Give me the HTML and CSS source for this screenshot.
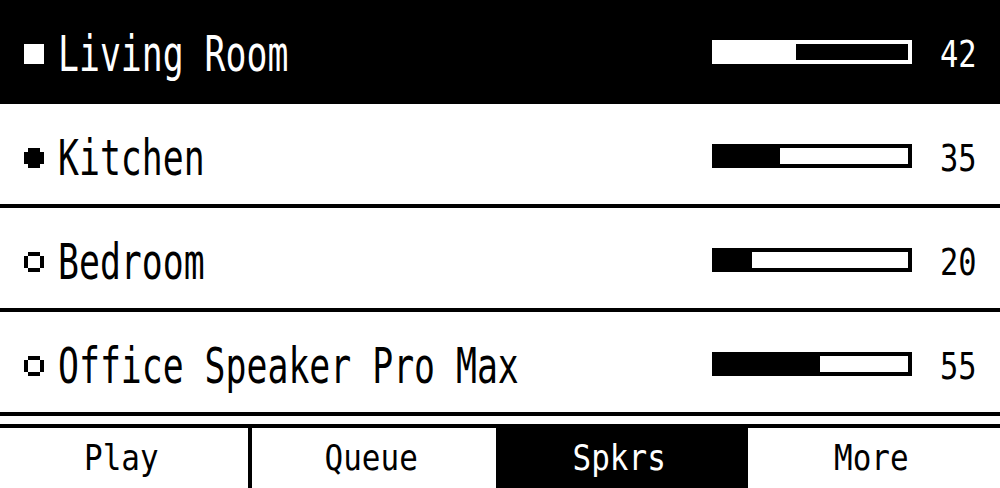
FILE: index.html
```html
<!DOCTYPE html>
<html>
<head>
<meta charset="utf-8">
<link rel="stylesheet" href="styles.css">
</head>
<body>
<div class="screen">
  <div class="list">
    <div class="row selected">
      <svg class="bullet" viewBox="0 0 5 5" shape-rendering="crispEdges"><rect x="0" y="0" width="5" height="5"/></svg>
      <div class="name"><span>Living Room</span></div>
      <div class="bar"><div class="fill" style="width:80px"></div></div>
      <div class="num"><span>42</span></div>
    </div>
    <div class="row">
      <svg class="bullet" viewBox="0 0 5 5" shape-rendering="crispEdges"><path d="M1 0h3v1h1v3h-1v1h-3v-1h-1v-3h1z"/></svg>
      <div class="name"><span>Kitchen</span></div>
      <div class="bar"><div class="fill" style="width:64px"></div></div>
      <div class="num"><span>35</span></div>
    </div>
    <div class="row">
      <svg class="bullet" viewBox="0 0 5 5" shape-rendering="crispEdges"><path fill-rule="evenodd" d="M1 0h3v1h1v3h-1v1h-3v-1h-1v-3h1z M1 1v3h3v-3z"/></svg>
      <div class="name"><span>Bedroom</span></div>
      <div class="bar"><div class="fill" style="width:36px"></div></div>
      <div class="num"><span>20</span></div>
    </div>
    <div class="row">
      <svg class="bullet" viewBox="0 0 5 5" shape-rendering="crispEdges"><path fill-rule="evenodd" d="M1 0h3v1h1v3h-1v1h-3v-1h-1v-3h1z M1 1v3h3v-3z"/></svg>
      <div class="name"><span>Office Speaker Pro Max</span></div>
      <div class="bar"><div class="fill" style="width:104px"></div></div>
      <div class="num"><span>55</span></div>
    </div>
  </div>
  <div class="tabs">
    <div class="tab"><span>Play</span></div>
    <div class="tab divided"><span>Queue</span></div>
    <div class="tab active"><span>Spkrs</span></div>
    <div class="tab"><span>More</span></div>
  </div>
</div>
</body>
</html>
```
FILE: styles.css
```css
html, body {
  margin: 0;
  padding: 0;
  background: #fff;
  font-family: "DejaVu Sans Mono", "Liberation Mono", monospace;
}

.screen {
  width: 1000px;
  height: 488px;
  overflow: hidden;
  background: #fff;
}

.row {
  height: 104px;
  box-sizing: border-box;
  border-bottom: 4px solid #000;
  padding: 8px 24px 0 24px;
  display: flex;
  align-items: center;
  color: #000;
  background: #fff;
}

.row.selected {
  background: #000;
  color: #fff;
}

.bullet {
  width: 20px;
  height: 20px;
  flex: none;
  margin-right: 14px;
  fill: currentColor;
}

.name {
  flex: 1;
  min-width: 0;
  white-space: nowrap;
  font-size: 49px;
  line-height: 1;
}

.name span {
  display: inline-block;
  transform: scaleX(0.71);
  transform-origin: left center;
}

.bar {
  flex: none;
  width: 200px;
  height: 24px;
  box-sizing: border-box;
  border: 4px solid currentColor;
  margin: 0 28px 4px 0;
}

.fill {
  height: 100%;
  background: currentColor;
}

.num {
  flex: none;
  width: 36px;
  white-space: nowrap;
  font-size: 38px;
  line-height: 1;
}

.num span {
  display: inline-block;
  transform: scaleX(0.8);
  transform-origin: left center;
}

.tabs {
  margin-top: 8px;
  border-top: 4px solid #000;
  height: 60px;
  display: grid;
  grid-template-columns: 248px 248px 252px 252px;
}

.tab {
  display: flex;
  align-items: center;
  justify-content: center;
  padding-right: 6px;
  font-size: 36px;
  line-height: 1;
  color: #000;
  background: #fff;
}

.tab span {
  display: inline-block;
  transform: scaleX(0.86);
}

.tab.divided {
  border-left: 4px solid #000;
}

.tab.active {
  background: #000;
  color: #fff;
}
```
